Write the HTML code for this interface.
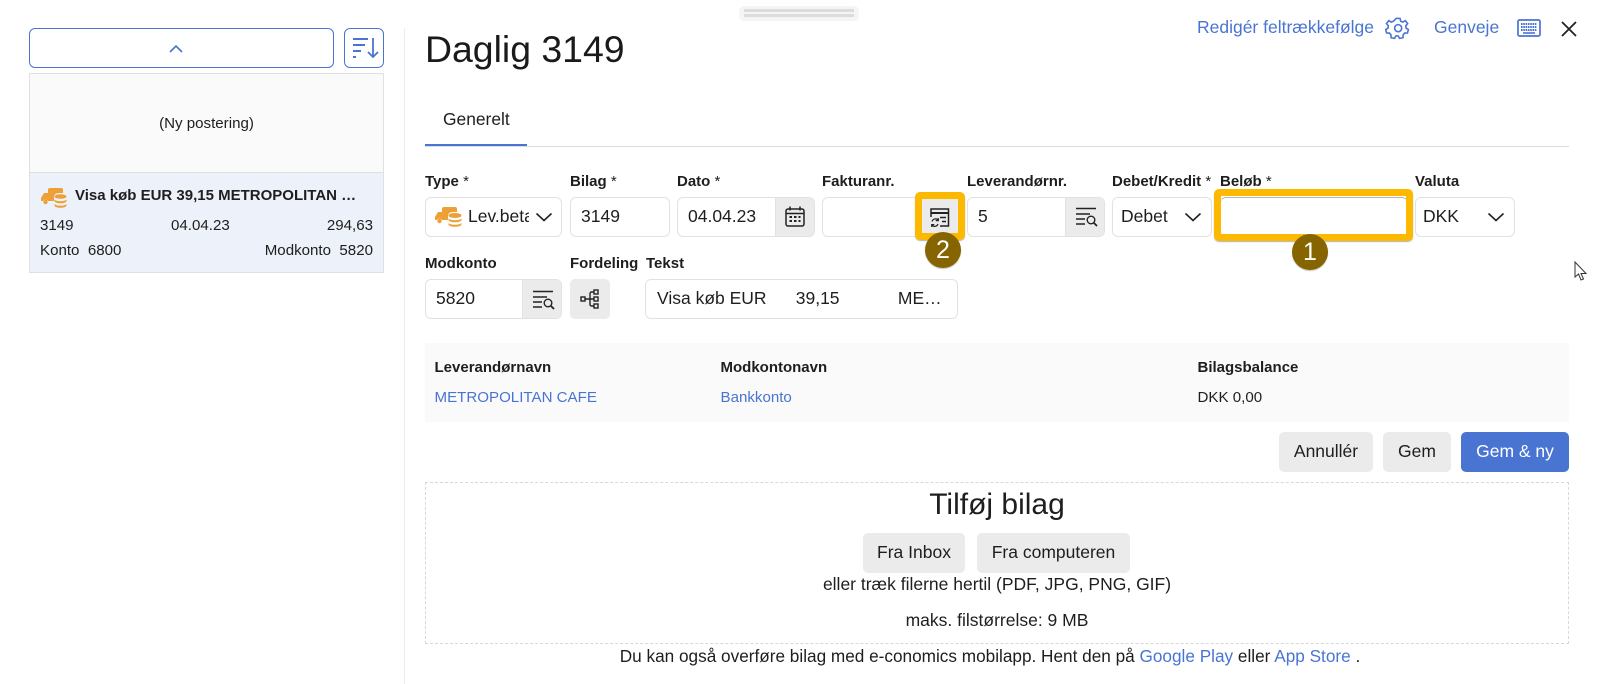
<!DOCTYPE html>
<html lang="da"><head><meta charset="utf-8"><title>Daglig 3149</title>
<style>
html,body{margin:0;padding:0;background:#fff}
body{width:1599px;height:684px;overflow:hidden;position:relative;font-family:"Liberation Sans",Arial,sans-serif;color:#1e1e1e;font-size:16px}
.a{position:absolute;white-space:nowrap}
.l{position:absolute;white-space:nowrap;font-weight:700;font-size:15px;line-height:18px;color:#1e1e1e}
.i{position:absolute;box-sizing:border-box;height:40px;border:1px solid #e2e2e2;border-radius:6px;background:#fff;font-size:17.5px;line-height:37px;white-space:nowrap;overflow:hidden}
.b{position:absolute;top:0;bottom:0;right:0;width:38px;background:#ebebeb;border-left:1px solid #e2e2e2}
.btn{position:absolute;box-sizing:border-box;height:40px;border-radius:5px;background:#ebebeb;text-align:center;line-height:38px;font-size:17.5px}
.c{left:0;width:100%;text-align:center}
.link{color:#4a74d2}
svg{position:absolute;overflow:visible}
.t{font-size:15.1px;line-height:18px}
</style></head><body>

<!-- drag handle -->
<div class="a" style="left:739px;top:6px;width:120px;height:15px;background:#f5f5f5;border-radius:5px"></div>
<div class="a" style="left:744px;top:9px;width:110px;height:3px;background:#dcdcdc"></div>
<div class="a" style="left:744px;top:14px;width:110px;height:3px;background:#dcdcdc"></div>

<!-- left panel -->
<div class="a" style="left:29px;top:28px;width:305px;height:40px;box-sizing:border-box;border:1px solid #4a74d2;border-radius:6px"></div>
<svg style="left:0;top:0" width="400" height="80"><path d="M170 52l6-6 6 6" fill="none" stroke="#4a74d2" stroke-width="1.6"/></svg>
<div class="a" style="left:344px;top:28px;width:40px;height:40px;box-sizing:border-box;border:1px solid #4a74d2;border-radius:6px"></div>
<svg style="left:344px;top:28px" width="40" height="40" fill="none" stroke="#4a74d2" stroke-width="2"><path d="M9 11h15M9 17h12M9 23h8M9 29h3"/><path d="M29 10v19M24 24l5 5 5-5" stroke-width="1.800"/></svg>

<div class="a" style="left:29px;top:73px;width:355px;height:100px;box-sizing:border-box;background:#fafafa;border:1px solid #e0e0e0"></div>
<div class="a t c" style="left:29px;width:355px;top:115px">(Ny postering)</div>
<div class="a" style="left:29px;top:172px;width:355px;height:101px;box-sizing:border-box;background:#edf1f9;border:1px solid #e0e0e0"></div>
<svg style="left:41px;top:186px" width="26" height="24"><g fill="#eda035"><path d="M0 12l3-5h4V3.500C7 2.500 8 2 9 2h11c1 0 2 .5 2 1.500V7h-4c-3 0-5 1.500-5 4v4H7a3 3 0 0 0-5 0H0z"/><circle cx="4.500" cy="16" r="2.200"/><ellipse cx="19.500" cy="10.500" rx="6" ry="2.300"/><path d="M13.500 13.500c1 1.200 3.500 1.700 6 1.700s5-.5 6-1.700v1.500c0 1.300-2.700 2.300-6 2.300s-6-1-6-2.300zM13.500 18c1 1.200 3.500 1.700 6 1.700s5-.5 6-1.700v1.500c0 1.300-2.700 2.300-6 2.300s-6-1-6-2.300z"/></g></svg>
<div class="a" style="left:75px;top:187px;font-weight:700;font-size:15px;line-height:18px">Visa køb EUR 39,15 METROPOLITAN …</div>
<div class="a t" style="left:40px;top:217px">3149</div>
<div class="a t" style="left:171px;top:217px">04.04.23</div>
<div class="a t" style="right:1226px;top:217px">294,63</div>
<div class="a t" style="left:40px;top:242px">Konto&nbsp;&nbsp;6800</div>
<div class="a t" style="right:1226px;top:242px">Modkonto&nbsp;&nbsp;5820</div>

<div class="a" style="left:404px;top:28px;width:1px;height:656px;background:#ececec"></div>

<!-- header -->
<div class="a" style="left:425px;top:27px;font-size:37.4px;line-height:44px;color:#1a1a1a">Daglig 3149</div>
<div class="a link" style="right:225px;top:17px;font-size:17.5px;line-height:20px">Redigér feltrækkefølge</div>
<svg style="left:1387px;top:17px" width="24" height="24" viewBox="0 0 24 24" fill="none" stroke="#4a74d2" stroke-width="1.700"><g transform="scale(.93)"><circle cx="12" cy="12" r="3.800"/><path d="M10 1.500h4l.7 3 2.300 1 2.700-1.600 2.500 3.200-2 2.300.3 2.600 2.500 1.500-1 3.700-3 .1-1.700 2-.1 3-3.700.7-1.500-2.700h-2.400l-1.500 2.700-3.700-.7-.1-3-1.700-2-3-.1-1-3.700 2.500-1.500.3-2.600-2-2.300 2.500-3.200 2.700 1.600 2.300-1z"/></g></svg>
<div class="a link" style="left:1434px;top:17px;font-size:17.5px;line-height:20px">Genveje</div>
<svg style="left:1517px;top:19px" width="24" height="18"><rect x="1" y="1" width="22" height="16" rx="1.500" fill="none" stroke="#4a74d2" stroke-width="1.700"/><path d="M4 5h16M4 8h16M4 11h16" stroke="#4a74d2" stroke-width="2" stroke-dasharray="1.600 .7"/><path d="M6 14h12" stroke="#4a74d2" stroke-width="1.600"/></svg>
<svg style="left:1561px;top:20.500px" width="16" height="16"><path d="M1 1l14 14M15 1L1 15" stroke="#222" stroke-width="1.800"/></svg>

<!-- tab -->
<div class="a" style="left:443px;top:109px;font-size:17.4px;line-height:20px">Generelt</div>
<div class="a" style="left:425px;top:146px;width:1144px;height:1px;background:#dcdcdc"></div>
<div class="a" style="left:425px;top:144px;width:102px;height:2px;background:#4a74d2"></div>

<!-- row 1 -->
<div class="l" style="left:425px;top:173px">Type <span style="font-weight:400">*</span></div>
<div class="i" style="left:425px;top:197px;width:137px"></div>
<svg style="left:435px;top:205px" width="28" height="24"><g fill="#eda035"><path d="M0 12l3-5h4V3.500C7 2.500 8 2 9 2h11c1 0 2 .5 2 1.500V7h-4c-3 0-5 1.500-5 4v4H7a3 3 0 0 0-5 0H0z"/><circle cx="4.500" cy="16" r="2.200"/><ellipse cx="20" cy="10.500" rx="6.500" ry="2.500"/><path d="M13.500 13.500c1 1.200 3.500 1.700 6.500 1.700s5.500-.5 6.500-1.700v1.500c0 1.300-2.900 2.300-6.500 2.300s-6.500-1-6.500-2.300zM13.500 18c1 1.200 3.500 1.700 6.500 1.700s5.500-.5 6.500-1.700v1.500c0 1.300-2.900 2.300-6.500 2.300s-6.500-1-6.500-2.300z"/></g></svg>
<div class="a" style="left:468px;top:197px;width:61px;overflow:hidden;font-size:17.5px;line-height:39px">Lev.betaling</div>
<svg style="left:536px;top:212px" width="16" height="10"><path d="M.5 1.500l7.500 7 7.500-7" fill="none" stroke="#222" stroke-width="1.600"/></svg>

<div class="l" style="left:570px;top:173px">Bilag <span style="font-weight:400">*</span></div>
<div class="i" style="left:570px;top:197px;width:100px;padding-left:10px">3149</div>

<div class="l" style="left:677px;top:173px">Dato <span style="font-weight:400">*</span></div>
<div class="i" style="left:677px;top:197px;width:138px;padding-left:10px">04.04.23<div class="b"></div></div>
<svg style="left:785px;top:206px" width="20" height="21" fill="none" stroke="#222" stroke-width="1.500"><rect x="1" y="3" width="18" height="17" rx="2"/><path d="M1 7.500h18M5 .5v4M15 .5v4"/><path d="M4.500 11h11M4.500 15h11" stroke-width="2" stroke-dasharray="2.500 2"/></svg>

<div class="l" style="left:822px;top:173px">Fakturanr.</div>
<div class="i" style="left:822px;top:197px;width:140px"><div class="b" style="width:40px"></div></div>

<div class="l" style="left:967px;top:173px">Leverandørnr.</div>
<div class="i" style="left:967px;top:197px;width:138px;padding-left:10px">5<div class="b"></div></div>
<svg style="left:1075px;top:207px" width="24" height="20" fill="none" stroke="#222" stroke-width="1.400"><path d="M1 1.500h20M1 7h14M1 12h9M1 17h9"/><circle cx="16" cy="13" r="3.800"/><path d="M19 16l3 3" stroke-width="1.800"/></svg>

<div class="l" style="left:1112px;top:173px">Debet/Kredit <span style="font-weight:400">*</span></div>
<div class="i" style="left:1112px;top:197px;width:100px;padding-left:8px">Debet</div>
<svg style="left:1185px;top:212px" width="16" height="10"><path d="M.5 1.500l7.500 7 7.500-7" fill="none" stroke="#222" stroke-width="1.600"/></svg>

<div class="l" style="left:1220px;top:173px">Beløb <span style="font-weight:400">*</span></div>
<div class="i" style="left:1220px;top:197px;width:188px;border-top-color:#b5b5b5"></div>

<div class="l" style="left:1415px;top:173px">Valuta</div>
<div class="i" style="left:1415px;top:197px;width:100px;padding-left:7px">DKK</div>
<svg style="left:1488px;top:212px" width="16" height="10"><path d="M.5 1.500l7.500 7 7.500-7" fill="none" stroke="#222" stroke-width="1.600"/></svg>

<!-- highlights -->
<div class="a" style="left:915px;top:192px;width:50px;height:48px;box-sizing:border-box;border:7px solid #fdb900;border-radius:5px;box-shadow:0 1px 1px rgba(0,0,0,.3)"></div>
<svg style="left:930px;top:208px" width="20" height="19" fill="none" stroke="#222" stroke-width="1.500"><path d="M1 9V1h17.500v17H10"/><path d="M1 5h17.500" stroke-width="2"/><path d="M10 9.500h6M12 13.500h4"/><path d="M2 13.500a3.600 3.600 0 0 1 6.300-1.200M8.300 10v2.600H5.700M8 16a3.600 3.600 0 0 1-6.200 1M1.700 19v-2.400h2.600" stroke-width="1.200"/></svg>
<div class="a" style="left:925px;top:232px;width:36px;height:36px;border-radius:50%;background:#866500;color:#fff;font-size:25px;line-height:36px;text-align:center;box-shadow:0 1px 1px rgba(0,0,0,.25)">2</div>

<div class="a" style="left:1214px;top:189px;width:199px;height:52px;box-sizing:border-box;border:7px solid #fdb900;border-radius:5px;box-shadow:0 1px 1px rgba(0,0,0,.3)"></div>
<div class="a" style="left:1292px;top:234px;width:36px;height:36px;border-radius:50%;background:#866500;color:#fff;font-size:25px;line-height:36px;text-align:center;box-shadow:0 1px 1px rgba(0,0,0,.25)">1</div>

<!-- cursor -->
<svg style="left:1574px;top:261px" width="14" height="20"><path d="M1 1v15l3.500-3 2.500 6 2.500-1-2.500-5.500h5z" fill="#fff" stroke="#333" stroke-width="1"/></svg>

<!-- row 2 -->
<div class="l" style="left:425px;top:255px">Modkonto</div>
<div class="i" style="left:425px;top:279px;width:137px;padding-left:10px;line-height:37px">5820<div class="b"></div></div>
<svg style="left:532px;top:290px" width="24" height="20" fill="none" stroke="#222" stroke-width="1.400"><path d="M1 1.500h20M1 7h14M1 12h9M1 17h9"/><circle cx="16" cy="13" r="3.800"/><path d="M19 16l3 3" stroke-width="1.800"/></svg>

<div class="l" style="left:570px;top:255px">Fordeling</div>
<div class="btn" style="left:570px;top:279px;width:40px"></div>
<svg style="left:580px;top:289px" width="20" height="20" fill="none" stroke="#222" stroke-width="1.400"><rect x="1" y="8" width="4" height="4"/><rect x="14" y="1" width="4" height="4"/><rect x="14" y="8" width="4" height="4"/><rect x="14" y="15" width="4" height="4"/><path d="M5 10h9M14 3h-2.500a1.500 1.500 0 0 0-1.500 1.500v11a1.500 1.500 0 0 0 1.500 1.500H14"/></svg>

<div class="l" style="left:646px;top:255px">Tekst</div>
<div class="i" style="left:645px;top:279px;width:313px;padding-left:11px;white-space:pre;line-height:37px">Visa køb EUR      39,15            ME…</div>

<!-- info panel -->
<div class="a" style="left:425px;top:343px;width:1144px;height:79px;background:#fafafa"></div>
<div class="l" style="left:434.500px;top:359px">Leverandørnavn</div>
<div class="l" style="left:720.500px;top:359px">Modkontonavn</div>
<div class="l" style="left:1197.500px;top:359px">Bilagsbalance</div>
<div class="a t link" style="left:434.500px;top:389px">METROPOLITAN CAFE</div>
<div class="a t link" style="left:720.500px;top:389px">Bankkonto</div>
<div class="a t" style="left:1197.500px;top:389px">DKK 0,00</div>

<!-- actions -->
<div class="btn" style="left:1279px;top:432px;width:94px">Annullér</div>
<div class="btn" style="left:1383px;top:432px;width:68px">Gem</div>
<div class="btn" style="left:1461px;top:432px;width:108px;background:#4a74d2;color:#fff">Gem &amp; ny</div>

<!-- upload -->
<div class="a" style="left:425px;top:482px;width:1144px;height:162px;box-sizing:border-box;border:1px dashed #d8d8d8"></div>
<div class="a c" style="left:425px;width:1144px;top:485.500px;font-size:30px;line-height:38px">Tilføj bilag</div>
<div class="btn" style="left:863px;top:533px;width:102px">Fra Inbox</div>
<div class="btn" style="left:977px;top:533px;width:153px">Fra computeren</div>
<div class="a c" style="left:425px;width:1144px;top:574px;font-size:17.5px;line-height:20px">eller træk filerne hertil (PDF, JPG, PNG, GIF)</div>
<div class="a c" style="left:425px;width:1144px;top:610px;font-size:17.5px;line-height:20px">maks. filstørrelse: 9 MB</div>
<div class="a c" style="left:418px;width:1144px;top:646px;font-size:17.2px;line-height:20px">Du kan også overføre bilag med e-conomics mobilapp. Hent den på <span class="link">Google Play</span> eller <span class="link">App Store</span> .</div>
</body></html>
